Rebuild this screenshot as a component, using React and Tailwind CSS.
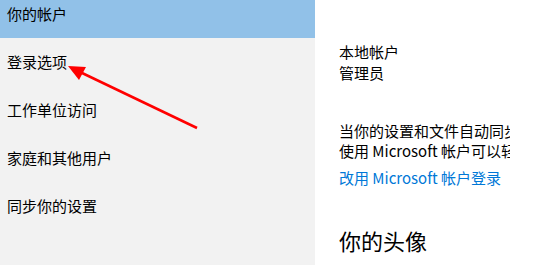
const font = { fontFamily: '"Noto Sans CJK SC", "Noto Sans", sans-serif' };

const navItems = ['登录选项', '工作单位访问', '家庭和其他用户', '同步你的设置'];

export default function App() {
  return (
    <div className="relative flex h-[265px] w-[536px] overflow-hidden bg-white text-black" style={font}>
      <aside className="w-[315px] shrink-0 bg-[#f2f2f2]">
        <div className="h-[38px] bg-[#91c1e8] pl-[7px] pt-[4px] text-[15px] leading-[20px]">你的帐户</div>
        {navItems.map((item) => (
          <div key={item} className="flex h-[48px] items-center pl-[7px] text-[15px] leading-[20px]">
            {item}
          </div>
        ))}
      </aside>

      <main className="flex-1 pl-[24px]">
        <div className="w-[171px] overflow-hidden whitespace-nowrap">
          <div className="pt-[41px] text-[15px] leading-[21px]">
            <p>本地帐户</p>
            <p>管理员</p>
          </div>
          <div className="mt-[38px] text-[15px] leading-[20px]">
            <p>当你的设置和文件自动同步到云时，Windows 体验会更好。</p>
            <p>使用 Microsoft 帐户可以轻松获取所有设备上的所有内容。</p>
          </div>
          <p className="mt-[7px] text-[15px] leading-[20px] text-[#0078d7]">改用 Microsoft 帐户登录</p>
          <h2 className="mt-[37px] text-[22px] leading-[30px]">你的头像</h2>
        </div>
      </main>

      {/* red annotation arrow */}
      <svg className="pointer-events-none absolute left-0 top-0" width="536" height="265">
        <line x1="197" y1="128" x2="80" y2="72" stroke="#ff0000" strokeWidth="2.5" />
        <polygon points="68,66 86,67 79,80" fill="#ff0000" />
      </svg>
    </div>
  );
}
